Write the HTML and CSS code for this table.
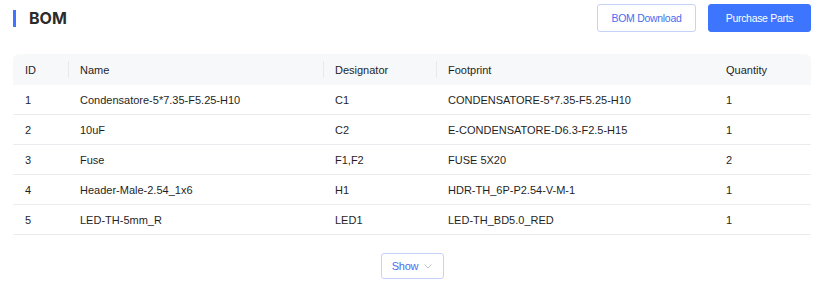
FILE: index.html
```html
<!DOCTYPE html>
<html>
<head>
<meta charset="utf-8">
<link rel="stylesheet" href="styles.css">
</head>
<body>
<div class="page">
  <div class="head">
    <div class="title">BOM</div>
    <div class="actions">
      <button class="btn btn-outline">BOM Download</button>
      <button class="btn btn-primary">Purchase Parts</button>
    </div>
  </div>
  <table class="bom">
    <colgroup>
      <col class="c-id"><col class="c-name"><col class="c-des"><col class="c-fp"><col class="c-qty">
    </colgroup>
    <thead>
      <tr><th>ID</th><th>Name</th><th>Designator</th><th>Footprint</th><th>Quantity</th></tr>
    </thead>
    <tbody>
      <tr><td>1</td><td>Condensatore-5*7.35-F5.25-H10</td><td>C1</td><td>CONDENSATORE-5*7.35-F5.25-H10</td><td>1</td></tr>
      <tr><td>2</td><td>10uF</td><td>C2</td><td>E-CONDENSATORE-D6.3-F2.5-H15</td><td>1</td></tr>
      <tr><td>3</td><td>Fuse</td><td>F1,F2</td><td>FUSE 5X20</td><td>2</td></tr>
      <tr><td>4</td><td>Header-Male-2.54_1x6</td><td>H1</td><td>HDR-TH_6P-P2.54-V-M-1</td><td>1</td></tr>
      <tr><td>5</td><td>LED-TH-5mm_R</td><td>LED1</td><td>LED-TH_BD5.0_RED</td><td>1</td></tr>
    </tbody>
  </table>
  <div class="more">
    <button class="btn btn-show">Show <svg class="chev" width="8" height="5" viewBox="0 0 8 5"><path d="M0.5 0.5 L4 4 L7.5 0.5" fill="none" stroke="#c4c7cf" stroke-width="1"/></svg></button>
  </div>
</div>
</body>
</html>
```
FILE: styles.css
```css
* { box-sizing: border-box; }
html, body { margin: 0; padding: 0; background: #fff; }
body { font-family: "Liberation Sans", Arial, sans-serif; color: #1f1f1f; font-size: 11px; }
.page { padding: 4px 15px 0 13px; }
.head { display: flex; justify-content: space-between; align-items: center; height: 28px; }
.title { font-family: Inter, sans-serif; border-left: 3px solid #3f75ff; padding-left: 13px; font-size: 16px; font-weight: 700; line-height: 17px; color: #2b2b2b; margin-top: 0; }
.actions { display: flex; gap: 12px; }
.btn { font-family: "Liberation Sans", Arial, sans-serif; font-size: 10.5px; letter-spacing: -0.3px; height: 28px; border-radius: 3px; cursor: pointer; padding: 0; }
.btn-outline { width: 99px; background: #fff; border: 1px solid #c6d3f7; color: #4a6cf0; }
.btn-primary { width: 103px; background: #3d75ff; border: 1px solid #3d75ff; color: #fff; }
.bom { margin-top: 22px; width: 798px; border-collapse: separate; border-spacing: 0; table-layout: fixed; }
.c-id { width: 55px; } .c-name { width: 255px; } .c-des { width: 113px; } .c-fp { width: 278px; } .c-qty { width: 97px; }
.bom th { background: #f7f8fa; font-weight: 400; text-align: left; height: 31px; padding: 0 12px; position: relative; color: #1f1f1f; }
.bom th:first-child { border-top-left-radius: 6px; }
.bom th:last-child { border-top-right-radius: 6px; }
.bom th:nth-child(2)::before, .bom th:nth-child(3)::before, .bom th:nth-child(4)::before {
  content: ""; position: absolute; left: 0; top: 7px; bottom: 7px; width: 1px; background: #e8e9ec;
}
.bom td { height: 30px; padding: 0 12px; border-bottom: 1px solid #ebecef; white-space: nowrap; color: #1f1f1f; }
.more { display: flex; justify-content: center; margin-top: 18px; }
.btn-show { width: 63px; height: 26px; font-size: 11px; background: #fff; border: 1px solid #c6d3f7; color: #4a6cf0; display: flex; align-items: center; justify-content: center; gap: 6px; }
.chev { margin-top: 1px; }
```
